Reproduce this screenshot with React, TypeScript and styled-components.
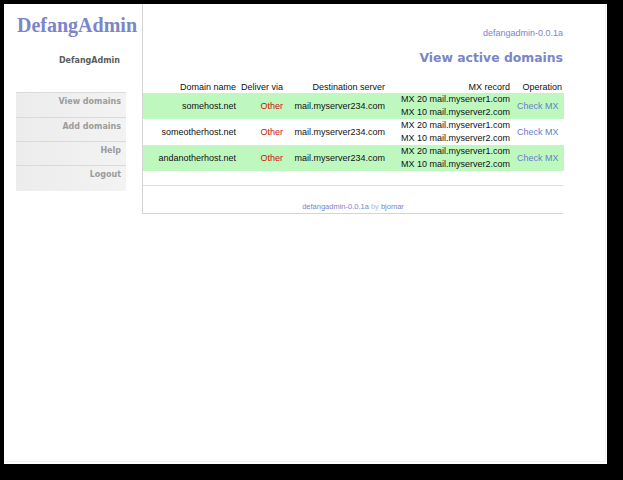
import styled, { createGlobalStyle } from "styled-components";

const domains = [
  { name: "somehost.net", via: "Other", server: "mail.myserver234.com", highlight: true },
  { name: "someotherhost.net", via: "Other", server: "mail.myserver234.com", highlight: false },
  { name: "andanotherhost.net", via: "Other", server: "mail.myserver234.com", highlight: true },
];

const mxRecords = ["MX 20 mail.myserver1.com", "MX 10 mail.myserver2.com"];

const menu = ["View domains", "Add domains", "Help", "Logout"];

const columns = [
  { label: "Domain name", width: 95 },
  { label: "Deliver via", width: 47 },
  { label: "Destination server", width: 102 },
  { label: "MX record", width: 125 },
  { label: "Operation", width: 52 },
];

const App = () => {
  return (
    <>
      <GlobalStyle />
      <Page>
        <Frame>
          <Sidebar>
            <Logo>DefangAdmin</Logo>
            <SubTitle>DefangAdmin</SubTitle>
            <Menu>
              {menu.map((item) => (
                <MenuItem key={item}>{item}</MenuItem>
              ))}
            </Menu>
          </Sidebar>

          <Main>
            <Version>defangadmin-0.0.1a</Version>
            <Heading>View active domains</Heading>

            <Table>
              <thead>
                <tr>
                  {columns.map((col) => (
                    <HeadCell key={col.label} $w={col.width}>
                      {col.label}
                    </HeadCell>
                  ))}
                </tr>
              </thead>
              <tbody>
                {domains.map((d) => (
                  <Row key={d.name} $highlight={d.highlight}>
                    <Cell>{d.name}</Cell>
                    <Cell>
                      <Via>{d.via}</Via>
                    </Cell>
                    <Cell>{d.server}</Cell>
                    <Cell>
                      {mxRecords.map((mx) => (
                        <MxLine key={mx}>{mx}</MxLine>
                      ))}
                    </Cell>
                    <OpCell>
                      <CheckLink>Check MX</CheckLink>
                    </OpCell>
                  </Row>
                ))}
              </tbody>
            </Table>

            <Divider />

            <Footer>
              <FooterLink>defangadmin-0.0.1a</FooterLink>
              <By> by </By>
              <FooterLink>bjomar</FooterLink>
            </Footer>
          </Main>
        </Frame>
      </Page>
    </>
  );
};

export default App;

const GlobalStyle = createGlobalStyle`
  html, body {
    margin: 0;
    padding: 0;
    background: #000;
  }
  body {
    font-family: "Liberation Sans", Arial, sans-serif;
    width: 623px;
    height: 480px;
    overflow: hidden;
  }
`;

const Page = styled.div`
  margin: 4px;
  width: 603px;
  height: 460px;
  background: #fff;
`;

const Frame = styled.div`
  display: flex;
  align-items: flex-start;
  width: 601px;
  height: 457px;
  border-right: 1px solid #f0f0f0;
  border-bottom: 1px solid #f0f0f0;
`;

const Sidebar = styled.aside`
  width: 138px;
  flex-shrink: 0;
  padding-top: 9px;
  box-sizing: border-box;
`;

const Logo = styled.div`
  padding-left: 13px;
  font-family: "Liberation Serif", "Times New Roman", serif;
  font-weight: 700;
  font-size: 20px;
  line-height: 24px;
  color: #7b85c8;
`;

const SubTitle = styled.div`
  width: 116px;
  margin-top: 18px;
  text-align: right;
  font-family: "DejaVu Sans", Verdana, sans-serif;
  font-weight: 700;
  font-size: 8px;
  line-height: 12px;
  color: #5c5c5c;
`;

const Menu = styled.nav`
  width: 110px;
  margin: 25px 0 0 12px;
  background: linear-gradient(to right, #ececec, #f3f3f3);
`;

const MenuItem = styled.div`
  height: 24px;
  box-sizing: border-box;
  padding: 3px 5px 0 0;
  border-top: 1px solid #dadada;
  text-align: right;
  font-family: "DejaVu Sans", Verdana, sans-serif;
  font-weight: 700;
  font-size: 8px;
  line-height: 12px;
  color: #9c9c9c;

  &:first-child {
    height: 25px;
  }

  &:last-child {
    height: 26px;
  }
`;

const Main = styled.main`
  width: 421px;
  flex-shrink: 0;
  padding-top: 23px;
  border-left: 1px solid #d4d4d4;
  border-bottom: 1px solid #d4d4d4;
  box-sizing: border-box;
`;

const Version = styled.div`
  text-align: right;
  font-size: 9px;
  line-height: 12px;
  color: #7b85c8;
`;

const Heading = styled.h1`
  margin: 11px 0 0;
  text-align: right;
  font-family: "DejaVu Sans", Verdana, sans-serif;
  font-weight: 700;
  font-size: 12.4px;
  line-height: 16px;
  color: #7b85c8;
`;

const Table = styled.table`
  width: 420px;
  margin-top: 14px;
  border-collapse: collapse;
  table-layout: fixed;
  font-size: 9px;
  color: #111;
`;

const HeadCell = styled.th<{ $w: number }>`
  box-sizing: border-box;
  width: ${(p) => p.$w}px;
  height: 13px;
  padding: 0 2px 0 0;
  font-weight: 400;
  text-align: right;
  line-height: 12px;
  vertical-align: middle;
  white-space: nowrap;
`;

const Row = styled.tr<{ $highlight: boolean }>`
  height: 26px;
  background: ${(p) => (p.$highlight ? "#bff8bf" : "#fff")};
`;

const Cell = styled.td`
  padding: 0 2px 0 0;
  text-align: right;
  vertical-align: middle;
  white-space: nowrap;
  line-height: 13px;
`;

const OpCell = styled.td`
  padding: 0 0 0 5px;
  text-align: left;
  vertical-align: middle;
  white-space: nowrap;
`;

const Via = styled.span`
  color: #cc1010;
`;

const MxLine = styled.div`
  line-height: 13px;
`;

const CheckLink = styled.span`
  color: #6680c8;
  cursor: pointer;
`;

const Divider = styled.div`
  margin-top: 14px;
  border-top: 1px solid #dcdcdc;
`;

const Footer = styled.div`
  padding: 16px 0 1px;
  text-align: center;
  font-size: 7.5px;
  line-height: 10px;
`;

const FooterLink = styled.span`
  color: #7b85c8;
`;

const By = styled.span`
  color: #b4b8d8;
`;
